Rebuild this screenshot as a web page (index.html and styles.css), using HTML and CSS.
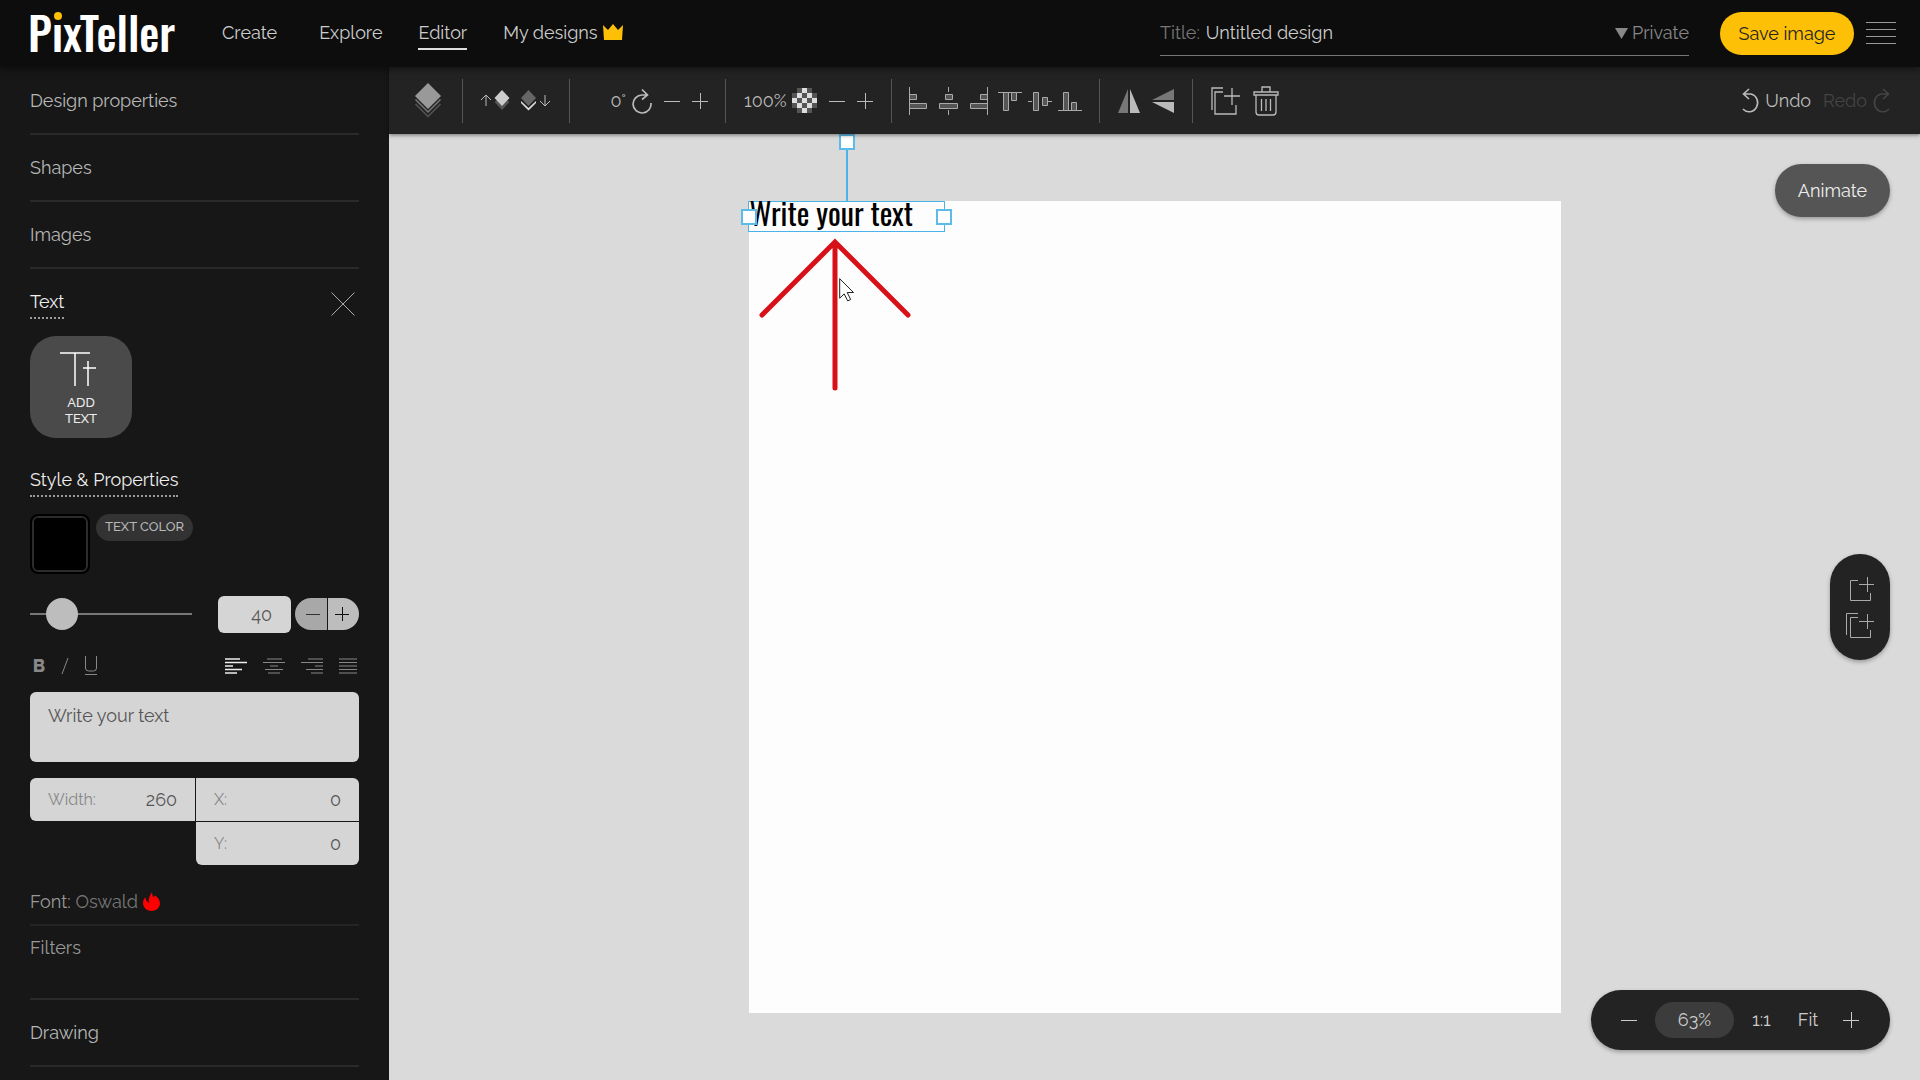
FILE: index.html
```html
<!DOCTYPE html>
<html lang="en">
<head>
<meta charset="utf-8">
<meta name="viewport" content="width=device-width, initial-scale=1">
<title>PixTeller Editor</title>
<link rel="stylesheet" href="styles.css">
</head>
<body>
<header class="topbar">
  <a class="logo" href="#">P<span class="logo-i">ı<span class="logo-dot"></span></span>xTeller</a>
  <nav class="nav">
    <a href="#" class="first">Create</a>
    <a href="#">Explore</a>
    <a href="#" class="active">Editor</a>
    <a href="#">My designs<svg class="crown" width="20" height="16" viewBox="0 0 20 16"><path fill="#fdc006" d="M0 1l5 5L10 0l5 6 5-5-1 15H1z"/></svg></a>
  </nav>
  <div class="title-field">
    <label for="title">Title:</label>
    <input id="title" type="text" value="Untitled design">
    <button class="privacy" type="button"><svg width="13" height="11" viewBox="0 0 13 11"><path fill="currentColor" d="M0 0h13L6.500 11z"/></svg>Private</button>
  </div>
  <button class="save" type="button">Save image</button>
  <button class="menu" type="button" aria-label="Menu"><svg width="30" height="24" viewBox="0 0 30 24"><path stroke="currentColor" d="M0 .500h30M0 7.500h30M0 14.500h30M0 21.500h30"/></svg></button>
</header>

<div class="workspace">
  <aside class="sidebar">
    <button class="section" type="button">Design properties</button>
    <button class="section" type="button">Shapes</button>
    <button class="section" type="button">Images</button>

    <section class="text-panel">
      <div class="panel-head">
        <h2 class="dotted">Text</h2>
        <button type="button" aria-label="Close"><svg width="24" height="24" viewBox="0 0 24 24"><path stroke="#aaa" d="M.500.500l23 23M23.500.500l-23 23"/></svg></button>
      </div>
      <button class="add-text" type="button">
        <svg width="44" height="36" viewBox="0 0 44 36"><path fill="none" stroke="#fff" stroke-width="1.500" d="M1 2h30M16 2v33M29 10v25M24 17h13"/></svg>
        <span>ADD<br>TEXT</span>
      </button>
      <h2 class="dotted">Style &amp; Properties</h2>
      <div class="color-row">
        <button class="swatch" id="swatch" type="button" aria-label="Text color"></button>
        <label class="pill-label" for="swatch">TEXT COLOR</label>
      </div>
      <div class="size-row">
        <input class="slider" type="range" min="0" max="100" value="12" aria-label="Font size slider">
        <input class="size-input" type="text" value="40" aria-label="Font size">
        <div class="stepper">
          <button type="button" aria-label="Smaller"><svg width="14" height="14" viewBox="0 0 14 14"><path stroke="#333" d="M0 7.500h14"/></svg></button>
          <button type="button" aria-label="Larger"><svg width="14" height="14" viewBox="0 0 14 14"><path stroke="#111" d="M0 7.500h14M7.500 0v14"/></svg></button>
        </div>
      </div>
      <div class="format-row">
        <div class="format-group">
          <button class="bold" type="button">B</button>
          <button type="button" aria-label="Italic"><svg width="14" height="18" viewBox="0 0 14 18"><path stroke="currentColor" d="M10 1L4 17"/></svg></button>
          <button type="button" aria-label="Underline"><svg width="14" height="20" viewBox="0 0 14 20"><path fill="none" stroke="currentColor" d="M1.500 0v12q0 3 3 3h5q3 0 3-3V0M1 18.500h12"/></svg></button>
        </div>
        <div class="align-group">
          <button class="on" type="button" aria-label="Align left"><svg width="22" height="18" viewBox="0 0 22 18"><path stroke="currentColor" stroke-width="1.500" d="M0 2h15M0 5.500h22M0 9h8M0 12.500h17M0 16h12"/></svg></button>
          <button type="button" aria-label="Align center"><svg width="22" height="18" viewBox="0 0 22 18"><path stroke="currentColor" d="M4 2h15M0 5.500h22M7 9h8M2 12.500h18M5 16h12"/></svg></button>
          <button type="button" aria-label="Align right"><svg width="22" height="18" viewBox="0 0 22 18"><path stroke="currentColor" d="M7 2h15M0 5.500h22M14 9h8M5 12.500h17M10 16h12"/></svg></button>
          <button type="button" aria-label="Justify"><svg width="18" height="18" viewBox="0 0 18 18"><path stroke="currentColor" d="M0 2h18M0 5.500h18M0 9h18M0 12.500h18M0 16h18"/></svg></button>
        </div>
      </div>
      <textarea class="text-area" aria-label="Text">Write your text</textarea>
      <div class="fields">
        <div class="field field-w"><label for="fw">Width:</label><input id="fw" type="text" value="260"></div>
        <div class="field field-x"><label for="fx">X:</label><input id="fx" type="text" value="0"></div>
        <div class="field field-y"><label for="fy">Y:</label><input id="fy" type="text" value="0"></div>
      </div>
      <button class="font-row" type="button">Font: <span>Oswald</span><svg width="17" height="19" viewBox="0 0 16 18"><path fill="#f00" d="M8.500 0c.3 2 .2 3.500 1.500 5 .8-.4 1-1 1.100-2 3 2 4.900 4.500 4.900 7.500 0 4.500-3.500 7.500-8 7.500s-8-3-8-7.500C0 8 1 6 2.500 5c0 2 .2 3.200 1.500 4C5 6 6.500 3.500 8.500 0z"/><path fill="#171717" d="M3.500 5c0 3 .8 5 2.500 6-1-2-.6-5 .3-7-1 1.600-1.600 2.600-1.900 3.800z"/></svg></button>
      <button class="filters-row" type="button">Filters</button>
    </section>
    <button class="section" type="button">Drawing</button>
  </aside>

  <main class="editor">
    <div class="toolbar">
      <div class="group group-layers">
        <button type="button" aria-label="Layers"><svg width="26" height="36" viewBox="0 0 26 36"><path fill="#999" d="M13 0l13 13-13 13L0 13z"/><path fill="none" stroke="#777" stroke-width="1.500" d="M.500 16.500L13 29l12.500-12.500"/><path fill="none" stroke="#555" stroke-width="1.500" d="M.500 21L13 33.500 25.500 21"/></svg></button>
      </div>
      <div class="group group-order">
        <button type="button" aria-label="Bring forward"><svg width="30" height="22" viewBox="0 0 30 22"><path fill="none" stroke="#bbb" d="M6 16V5.500M1 10l5-5 5 5"/><path fill="#555" d="M14.500 12l7.500 8 7.500-8-7.500-6z"/><path fill="#ccc" d="M22 0l7.500 8-7.500 8-7.500-8z"/></svg></button>
        <button type="button" aria-label="Send backward"><svg width="30" height="22" viewBox="0 0 30 22"><path fill="#ddd" d="M0 11l7.500 7 7.500-7v2l-7.500 7.500L0 13z"/><path fill="#666" d="M7.500 0L15 8l-7.500 8L0 8z"/><path fill="none" stroke="#bbb" d="M24 5v10.500M19 11l5 5 5-5"/></svg></button>
      </div>
      <div class="group group-angle">
        <span class="value angle">0°</span>
        <button type="button" aria-label="Rotate"><svg width="20" height="26" viewBox="0 0 20 26"><path fill="none" stroke="#bbb" stroke-width="1.700" d="M15 7H10A9 9 0 1 0 19 15M10 1.500L15.500 7 10 11.500"/></svg></button>
        <button class="spaced" type="button" aria-label="Decrease angle"><svg width="16" height="16" viewBox="0 0 16 16"><path stroke="#bbb" d="M0 8.500h16"/></svg></button>
        <button class="spaced" type="button" aria-label="Increase angle"><svg width="16" height="16" viewBox="0 0 16 16"><path stroke="#bbb" d="M0 8.500h16M8.500 0v16"/></svg></button>
      </div>
      <div class="group">
        <span class="value percent">100%</span>
        <button type="button" aria-label="Opacity"><svg width="25" height="25" viewBox="0 0 25 25"><path fill="#555" d="M5 0h15v5h5v15h-5v5H5v-5H0V5h5z"/><path fill="#ddd" d="M10 0h5v5h-5zM5 5h5v5H5zM15 5h5v5h-5zM0 10h5v5H0zM10 10h5v5h-5zM20 10h5v5h-5zM5 15h5v5H5zM15 15h5v5h-5zM10 20h5v5h-5z"/></svg></button>
        <button class="spaced" type="button" aria-label="Less opacity"><svg width="16" height="16" viewBox="0 0 16 16"><path stroke="#bbb" d="M0 8.500h16"/></svg></button>
        <button class="spaced" type="button" aria-label="More opacity"><svg width="16" height="16" viewBox="0 0 16 16"><path stroke="#bbb" d="M0 8.500h16M8.500 0v16"/></svg></button>
      </div>
      <div class="group group-align">
        <button type="button" aria-label="Align left edges"><svg width="24" height="30" viewBox="0 0 24 30"><path fill="#555" stroke="#aaa" d="M1.500 1v28M1.500 8.500h7v5h-7zM1.500 17.500h17v5h-17z"/></svg></button>
        <button type="button" aria-label="Align centers"><svg width="24" height="30" viewBox="0 0 24 30"><path fill="#555" stroke="#aaa" d="M10.500 1v5M10.500 24v5M7.500 8.500h7v5h-7zM1.500 17.500h18v5h-18z"/></svg></button>
        <button type="button" aria-label="Align right edges"><svg width="24" height="30" viewBox="0 0 24 30"><path fill="#555" stroke="#aaa" d="M19.500 1v28M12.500 8.500h7v5h-7zM2.500 17.500h17v5h-17z"/></svg></button>
        <button type="button" aria-label="Align top edges"><svg width="24" height="30" viewBox="0 0 24 30"><path fill="#555" stroke="#aaa" d="M0 6.500h24M5.500 6.500h5v18h-5zM13.500 6.500h5v8h-5z"/></svg></button>
        <button type="button" aria-label="Align middles"><svg width="24" height="30" viewBox="0 0 24 30"><path fill="#555" stroke="#aaa" d="M0 15.500h4M20 15.500h4M5.500 6.500h5v18h-5zM14.500 11.500h5v8h-5z"/></svg></button>
        <button type="button" aria-label="Align bottom edges"><svg width="24" height="30" viewBox="0 0 24 30"><path fill="#555" stroke="#aaa" d="M0 24.500h24M5.500 6.500h5v18h-5zM13.500 16.500h5v8h-5z"/></svg></button>
      </div>
      <div class="group group-flip">
        <button type="button" aria-label="Flip horizontally"><svg width="22" height="24" viewBox="0 0 22 24"><path fill="#777" d="M10 0v24H0z"/><path fill="#bbb" d="M12 0v24h10z"/></svg></button>
        <button type="button" aria-label="Flip vertically"><svg width="22" height="24" viewBox="0 0 22 24"><path fill="#777" d="M22 0v11H0z"/><path fill="#bbb" d="M22 24V13H0z"/></svg></button>
      </div>
      <div class="group group-item">
        <button type="button" aria-label="Duplicate"><svg width="30" height="30" viewBox="0 0 30 30"><path fill="none" stroke="#bbb" stroke-width="1.300" d="M1 24V2h11M12 6H4v22h21v-9M21 2v17M13 10h16"/></svg></button>
        <button type="button" aria-label="Delete"><svg width="26" height="30" viewBox="0 0 26 30"><path fill="none" stroke="#bbb" stroke-width="1.300" d="M9 6V1h8v5M1 6h24v3H1zM3 9v17q0 3 3 3h14q3 0 3-3V9M8.500 13v12M13 13v12M17.500 13v12"/></svg></button>
      </div>
      <div class="history">
        <button type="button"><svg width="18" height="26" viewBox="0 0 18 26"><path fill="none" stroke="currentColor" stroke-width="1.600" d="M7 1L1.500 6 7 11M1.500 6H9A8.500 9 0 1 1 1 21"/></svg>Undo</button>
        <button class="off" type="button">Redo<svg width="18" height="26" viewBox="0 0 18 26"><path fill="none" stroke="currentColor" stroke-width="1.600" d="M11 1l5.500 5L11 11M16.500 6H9A8.500 9 0 1 0 17 21"/></svg></button>
      </div>
    </div>

    <div class="stage">
      <div class="artboard">
        <div class="selection">Write your text
          <i class="stem"></i><i class="handle handle-top"></i><i class="handle handle-left"></i><i class="handle handle-right"></i>
        </div>
        <svg class="hint" width="156" height="158" viewBox="0 0 156 158"><path fill="none" stroke="#d81118" stroke-width="5" stroke-linecap="round" d="M5 78L78 5l73 73M78 5v146"/></svg>
        <svg class="cursor" width="16" height="24" viewBox="0 0 16 24"><path fill="#fff" stroke="#222" d="M.700.700v19.500l4.500-4.300 3.500 7 3-1.400-3.500-7h6.300z"/></svg>
      </div>
      <button class="animate" type="button">Animate</button>
      <div class="pages">
        <button type="button" aria-label="Add page"><svg width="30" height="26" viewBox="0 0 30 26"><path fill="none" stroke="#aaa" d="M13 4.500H5.500v20h20V17M22.500 1v15M14 8.500h15"/></svg></button>
        <button type="button" aria-label="Duplicate page"><svg width="30" height="26" viewBox="0 0 30 26"><path fill="none" stroke="#aaa" d="M1.500 22V.500H13M13 4.500H5.500v20h20V17M22.500 1v15M14 8.500h15"/></svg></button>
      </div>
      <div class="zoombar">
        <button type="button" aria-label="Zoom out"><svg width="16" height="16" viewBox="0 0 16 16"><path stroke="#ccc" d="M0 8.500h16"/></svg></button>
        <button class="zoom-value" type="button">63%</button>
        <button type="button">1:1</button>
        <button class="zoom-fit" type="button">Fit</button>
        <button type="button" aria-label="Zoom in"><svg width="16" height="16" viewBox="0 0 16 16"><path stroke="#ccc" d="M0 8.500h16M8.500 0v16"/></svg></button>
      </div>
    </div>
  </main>
</div>
</body>
</html>
```
FILE: styles.css
```css
* { box-sizing: border-box; }

body {
  margin: 0;
  height: 100vh;
  display: flex;
  flex-direction: column;
  overflow: hidden;
  background: #171717;
  color: #b8b8b8;
  font: 18px/24px Raleway, Lato, sans-serif;
}

button, input, textarea { font: inherit; color: inherit; }
button { padding: 0; border: 0; background: none; white-space: nowrap; cursor: pointer; }
input { min-width: 0; border: 0; background: none; outline: 0; }
a { color: inherit; text-decoration: none; }
h2 { margin: 0; font-size: 18px; font-weight: 400; color: #eee; }
svg { display: block; flex: none; }

/* Top bar */
.topbar {
  flex: none;
  height: 67px;
  display: flex;
  align-items: center;
  padding: 0 24px 0 28px;
  background: #0d0d0d;
  box-shadow: 0 2px 8px rgba(0, 0, 0, .5);
  position: relative;
  z-index: 2;
}
.logo {
  width: 146px;
  margin: 0 48px 3px 0;
  color: #fff;
  font: 500 45px/60px Oswald, "Liberation Sans Narrow", "Liberation Sans", sans-serif;
}
.logo-i { position: relative; }
.logo-dot {
  position: absolute;
  left: 2px;
  top: 14px;
  width: 8px;
  height: 8px;
  border-radius: 50%;
  background: #fdc006;
}
.nav { display: flex; gap: 36px; margin-bottom: 2px; color: #ccc; }
.nav a { display: flex; gap: 5px; padding: 6px 0 3px; border-bottom: 2px solid transparent; }
.nav a.first { padding-right: 6px; }
.nav a.active { border-color: #ddd; }
.crown { margin-top: 3px; }
.title-field {
  flex: 0 1 529px;
  margin-left: auto;
  display: flex;
  gap: 6px;
  height: 44px;
  align-items: center;
  border-bottom: 1px solid #777;
  color: #777;
}
.title-field input { flex: 1; padding: 0; color: #ccc; }
.privacy { display: flex; align-items: center; gap: 4px; color: #888; }
.save {
  width: 134px;
  height: 43px;
  margin-left: 31px;
  border-radius: 22px;
  background: #fdc006;
  color: #222;
}
.menu { margin-left: 12px; color: #999; }

/* Sidebar */
.workspace { flex: 1; min-height: 0; display: flex; }
.sidebar { flex: none; width: 389px; padding: 1px 30px 0; overflow: hidden; }
.section {
  display: block;
  width: 100%;
  height: 67px;
  border-bottom: 2px solid #2a2a2a;
  text-align: left;
}
.text-panel { padding-top: 21px; border-bottom: 2px solid #2a2a2a; }
.panel-head {
  display: flex;
  justify-content: space-between;
  align-items: center;
  height: 28px;
  margin-bottom: 18px;
  padding-right: 4px;
}
.dotted { width: max-content; height: 29px; border-bottom: 2px dotted #999; }
.add-text {
  width: 102px;
  height: 102px;
  display: flex;
  flex-direction: column;
  align-items: center;
  gap: 8px;
  padding-top: 15px;
  margin-bottom: 30px;
  border-radius: 26px;
  background: #4a4a4a;
  color: #eee;
  font-size: 13px;
  font-weight: 500;
  line-height: 16px;
}
.color-row { display: flex; gap: 6px; margin-top: 17px; }
.swatch {
  width: 60px;
  height: 60px;
  border: 2px solid #000;
  border-radius: 8px;
  background: #000;
  box-shadow: inset 0 0 0 2px #2c2c2c;
}
.pill-label {
  height: 27px;
  padding: 0 9px;
  border-radius: 14px;
  background: #333;
  font-size: 13px;
  font-weight: 500;
  line-height: 26px;
}
.size-row { display: flex; align-items: center; height: 38px; margin-top: 21px; }
.slider {
  appearance: none;
  width: 162px;
  height: 32px;
  margin: 0 26px 0 0;
  background: linear-gradient(#777, #777) center / 100% 2px no-repeat;
}
.slider::-webkit-slider-thumb {
  appearance: none;
  width: 32px;
  height: 32px;
  border-radius: 50%;
  background: #bdbdbd;
}
.size-input {
  width: 73px;
  height: 37px;
  padding: 0 19px;
  border-radius: 6px;
  background: #d5d5d5;
  color: #555;
  text-align: right;
}
.stepper {
  flex: 1;
  display: grid;
  grid-template-columns: 1fr 1fr;
  gap: 1px;
  height: 32px;
  margin-left: 4px;
}
.stepper button {
  display: flex;
  align-items: center;
  padding-left: 7px;
  background: #bdbdbd;
  border-radius: 0 16px 16px 0;
}
.stepper button:first-child { padding-left: 11px; background: #a8a8a8; border-radius: 16px 0 0 16px; }
.format-row { display: flex; justify-content: space-between; align-items: center; height: 24px; margin-top: 21px; color: #888; }
.format-group { display: flex; align-items: center; gap: 12px; padding-left: 2px; }
.align-group { display: flex; gap: 16px; padding-right: 2px; }
.align-group .on { color: #eee; }
.bold { width: 14px; font-weight: 800; }
.text-area {
  display: block;
  width: 100%;
  height: 70px;
  margin: 14px 0 16px;
  padding: 12px 18px;
  border: 0;
  border-radius: 6px;
  background: #d5d5d5;
  color: #555;
  resize: none;
}
.fields { display: grid; grid-template-columns: 165px 1fr; gap: 1px; }
.field { display: flex; align-items: center; height: 43px; padding: 0 18px; background: #d5d5d5; color: #888; }
.field input { flex: 1; width: 0; padding: 0; color: #555; text-align: right; }
.field label { font-size: 16px; }
.field-w { border-radius: 6px 0 0 6px; }
.field-x { border-radius: 0 6px 0 0; }
.field-y { grid-column: 2; border-radius: 0 0 6px 6px; }
.font-row {
  width: 100%;
  display: flex;
  align-items: center;
  gap: 5px;
  height: 61px;
  padding-top: 14px;
  border-bottom: 2px solid #242424;
  color: #999;
}
.font-row span { color: #777; }
.filters-row { display: block; width: 100%; height: 72px; padding-bottom: 28px; text-align: left; color: #999; }

/* Toolbar */
.editor { flex: 1; min-width: 0; display: flex; flex-direction: column; }
.toolbar {
  flex: none;
  display: flex;
  align-items: center;
  height: 67px;
  padding-right: 30px;
  background: #232323;
  box-shadow: 0 1px 4px rgba(0, 0, 0, .5);
  position: relative;
  z-index: 1;
}
.group { display: flex; align-items: center; height: 44px; padding: 0 18px; border-left: 1px solid #555; }
.group-layers { width: 73px; padding-left: 26px; border-left: 0; }
.group-order { gap: 11px; padding: 0 18px 0 17px; }
.group-angle { padding-right: 17px; }
.group-align { gap: 6px; padding: 0 17px 0 16px; }
.group-flip { gap: 12px; }
.group-item { gap: 12px; }
.value { margin-right: 6px; text-align: right; }
.angle { width: 38px; }
.percent { width: 42px; }
.spaced { margin-left: 12px; }
.history { display: flex; gap: 12px; margin-left: auto; color: #bbb; }
.history button { display: flex; align-items: center; gap: 5px; }
.history .off { color: #444; }

/* Stage */
.stage {
  flex: 1;
  min-height: 0;
  display: flex;
  justify-content: center;
  align-items: center;
  position: relative;
  background: #dadada;
}
.artboard { height: calc(100% - 134px); aspect-ratio: 1; position: relative; background: #fdfdfd; }
.selection {
  position: absolute;
  left: -1px;
  top: 0;
  width: 197px;
  height: 31px;
  padding-left: 1px;
  border: 1px solid #4ab4e8;
  color: #000;
  font: 30px/22px Oswald, "Liberation Sans Narrow", "Liberation Sans", sans-serif;
  white-space: nowrap;
}
.stem { position: absolute; left: 97px; top: -54px; width: 2px; height: 53px; background: #4ab4e8; }
.handle { position: absolute; width: 16px; height: 16px; border: 2px solid #5dbbea; background: #fff; }
.handle-top { left: 90px; top: -68px; }
.handle-left { left: -8px; top: 7px; }
.handle-right { right: -8px; top: 7px; }
.hint { position: absolute; left: 8px; top: 36px; }
.cursor { position: absolute; left: 90px; top: 77px; }
.animate {
  position: absolute;
  top: 30px;
  right: 30px;
  width: 115px;
  height: 53px;
  border-radius: 27px;
  background: #555;
  color: #eee;
  box-shadow: 0 2px 4px rgba(0, 0, 0, .3);
}
.pages {
  position: absolute;
  right: 30px;
  top: calc(50% - 53px);
  width: 60px;
  height: 106px;
  display: flex;
  flex-direction: column;
  align-items: center;
  justify-content: center;
  gap: 11px;
  border-radius: 30px;
  background: #232323;
  box-shadow: 0 2px 4px rgba(0, 0, 0, .3);
}
.zoombar {
  position: absolute;
  right: 30px;
  bottom: 30px;
  display: flex;
  align-items: center;
  gap: 18px;
  width: 299px;
  height: 60px;
  padding: 0 30px;
  border-radius: 30px;
  background: #232323;
  color: #ccc;
  box-shadow: 0 2px 4px rgba(0, 0, 0, .3);
}
.zoom-value { width: 79px; height: 36px; border-radius: 18px; background: #3c3c3c; }
.zoom-fit { margin: 0 7px 0 9px; }
```
